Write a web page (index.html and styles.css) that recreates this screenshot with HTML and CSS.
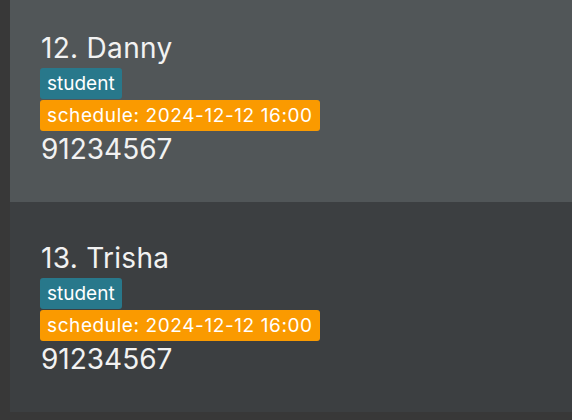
FILE: index.html
```html
<!DOCTYPE html>
<html>
<head>
<meta charset="utf-8">
<link rel="stylesheet" href="styles.css">
</head>
<body>
<div class="list">
  <div class="card card-selected">
    <div class="name">12. Danny</div>
    <div class="tags">
      <span class="tag tag-student">student</span>
      <span class="tag tag-schedule">schedule: 2024-12-12 16:00</span>
    </div>
    <div class="phone">91234567</div>
  </div>
  <div class="card">
    <div class="name">13. Trisha</div>
    <div class="tags">
      <span class="tag tag-student">student</span>
      <span class="tag tag-schedule">schedule: 2024-12-12 16:00</span>
    </div>
    <div class="phone">91234567</div>
  </div>
</div>
</body>
</html>
```
FILE: styles.css
```css
html, body {
  margin: 0;
  padding: 0;
  background: #383838;
  height: 100%;
  overflow: hidden;
}
body {
  font-family: Inter, Roboto, "Liberation Sans", sans-serif;
  color: #f2f2f2;
}
.list {
  margin-left: 10px;
  margin-top: -8px;
  display: flex;
  flex-direction: column;
}
.card {
  height: 210px;
  box-sizing: border-box;
  padding: 37px 0 0 31px;
  background: #3c3f41;
  display: flex;
  flex-direction: column;
}
.card-selected {
  background: #515658;
}
.name {
  font-size: 28px;
  line-height: 39px;
  letter-spacing: 0.3px;
  white-space: nowrap;
}
.tags {
  display: flex;
  flex-direction: column;
  align-items: flex-start;
  gap: 1px;
  margin-left: -1px;
}
.tag {
  font-size: 19px;
  line-height: 31px;
  padding: 0 7px;
  border-radius: 3px;
  color: #ffffff;
  white-space: nowrap;
}
.tag-student {
  background: #28788b;
}
.tag-schedule {
  background: #fa9a00;
  letter-spacing: 0.6px;
}
.phone {
  font-size: 28px;
  line-height: 36px;
}
```
